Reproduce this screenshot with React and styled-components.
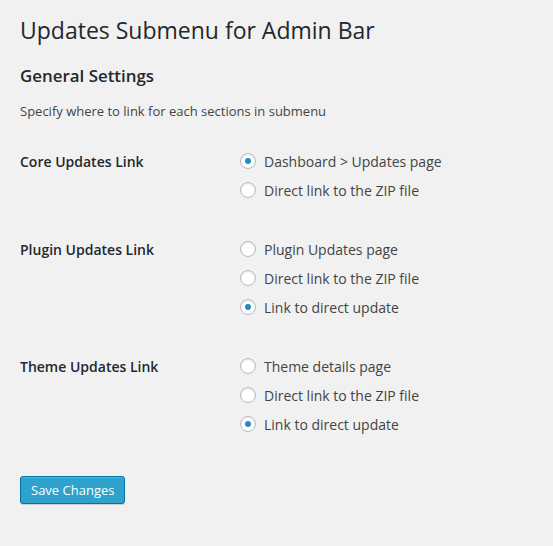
import React, { useState } from "react";
import styled, { createGlobalStyle } from "styled-components";

const GlobalStyle = createGlobalStyle`
  html, body {
    margin: 0;
    padding: 0;
    background: #f1f1f1;
  }
  body {
    font-family: "Open Sans", "Liberation Sans", sans-serif;
    font-size: 13px;
    color: #444;
  }
`;

const Wrap = styled.div`
  padding: 16px 20px 40px 20px;
`;

const Title = styled.h1`
  margin: 0;
  font-size: 23px;
  font-weight: 400;
  line-height: 29px;
  color: #23282d;
`;

const SectionTitle = styled.h3`
  margin: 18.6px 0 0;
  font-size: 16.9px;
  font-weight: 600;
  line-height: 23.8px;
  color: #23282d;
`;

const Description = styled.p`
  margin: 14.6px 0 0;
  font-size: 13px;
  line-height: 19.5px;
  color: #444;
`;

const SettingsTable = styled.div`
  margin-top: 10.6px;
  display: flex;
  flex-direction: column;
`;

const Row = styled.div`
  display: grid;
  grid-template-columns: 220px 1fr;
  padding: 15px 0;
`;

const RowLabel = styled.div`
  font-size: 14px;
  font-weight: 600;
  line-height: 29px;
  color: #23282d;
`;

const Options = styled.div`
  display: flex;
  flex-direction: column;
`;

const Option = styled.label`
  display: block;
  height: 29px;
  font-size: 14px;
  line-height: 29px;
  color: #444;
  cursor: pointer;
  white-space: nowrap;
`;

const Radio = styled.span`
  display: inline-block;
  box-sizing: border-box;
  width: 16px;
  height: 16px;
  margin: -4px 8px 0 0;
  vertical-align: middle;
  border: 1px solid #b4b9be;
  border-radius: 50%;
  background: #fff;
  box-shadow: inset 0 1px 2px rgba(0, 0, 0, 0.1);
  position: relative;

  &::before {
    content: "";
    display: ${(p) => (p.$checked ? "block" : "none")};
    position: absolute;
    left: 4px;
    top: 4px;
    width: 6px;
    height: 6px;
    border-radius: 50%;
    background: #1e8cbe;
  }
`;

const Submit = styled.div`
  margin-top: 21.7px;
`;

const PrimaryButton = styled.button`
  box-sizing: border-box;
  height: 28px;
  padding: 0 10px 1px;
  font-family: "Open Sans", "Liberation Sans", sans-serif;
  font-size: 13px;
  line-height: 26px;
  color: #fff;
  background: #2ea2cc;
  border: 1px solid #0074a2;
  border-radius: 3px;
  box-shadow: inset 0 1px 0 rgba(120, 200, 230, 0.5), 0 1px 0 rgba(0, 0, 0, 0.15);
  cursor: pointer;
`;

const SETTINGS = [
  {
    key: "core",
    label: "Core Updates Link",
    options: ["Dashboard > Updates page", "Direct link to the ZIP file"],
    selected: 0,
  },
  {
    key: "plugin",
    label: "Plugin Updates Link",
    options: ["Plugin Updates page", "Direct link to the ZIP file", "Link to direct update"],
    selected: 2,
  },
  {
    key: "theme",
    label: "Theme Updates Link",
    options: ["Theme details page", "Direct link to the ZIP file", "Link to direct update"],
    selected: 2,
  },
];

const App = () => {
  const [values, setValues] = useState(
    Object.fromEntries(SETTINGS.map((s) => [s.key, s.selected]))
  );

  return (
    <>
      <GlobalStyle />
      <Wrap>
        <Title>Updates Submenu for Admin Bar</Title>
        <SectionTitle>General Settings</SectionTitle>
        <Description>Specify where to link for each sections in submenu</Description>
        <SettingsTable>
          {SETTINGS.map((s) => (
            <Row key={s.key}>
              <RowLabel>{s.label}</RowLabel>
              <Options>
                {s.options.map((opt, i) => (
                  <Option key={opt} onClick={() => setValues({ ...values, [s.key]: i })}>
                    <Radio $checked={values[s.key] === i} />
                    {opt}
                  </Option>
                ))}
              </Options>
            </Row>
          ))}
        </SettingsTable>
        <Submit>
          <PrimaryButton>Save Changes</PrimaryButton>
        </Submit>
      </Wrap>
    </>
  );
};

export default App;
